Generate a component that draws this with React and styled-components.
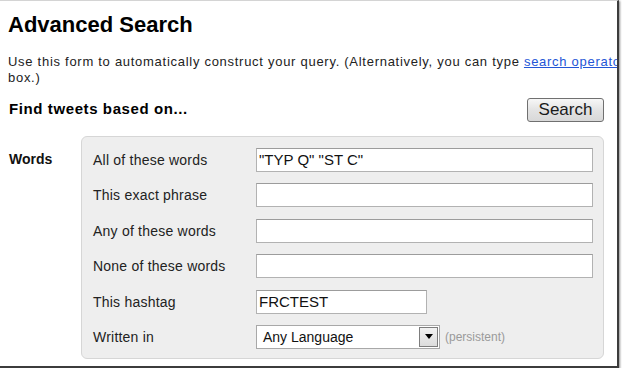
import React from "react";
import styled, { createGlobalStyle } from "styled-components";

const Global = createGlobalStyle`
  html, body { margin: 0; padding: 0; background: #ffffff; }
  body { font-family: "Liberation Sans", Arial, sans-serif; color: #111; }
`;

const Frame = styled.div`
  box-sizing: border-box;
  width: 619px;
  height: 368px;
  border-top: 1px solid #d4d4d4;
  border-right: 2px solid #3c3c3c;
  border-bottom: 2px solid #3c3c3c;
  box-shadow: 1px 1px 2px rgba(0, 0, 0, 0.45);
  overflow: hidden;
  background: #fff;
`;

const Content = styled.div`
  width: 596px;
  padding: 11px 0 0 8px;
`;

const Title = styled.h1`
  margin: 0;
  font-size: 22px;
  line-height: 25px;
  font-weight: bold;
  color: #000;
`;

const Desc = styled.p`
  margin: 17px 0 0;
  font-size: 13px;
  letter-spacing: 0.72px;
  line-height: 16px;
  color: #222;
  white-space: nowrap;
`;

const Link = styled.a`
  color: #2456d6;
  text-decoration: underline;
`;

const HeaderRow = styled.div`
  display: flex;
  justify-content: space-between;
  align-items: center;
  margin-top: 12px;
`;

const Subhead = styled.h3`
  margin: 0 0 3px 1px;
  font-size: 15px;
  letter-spacing: 0.6px;
  line-height: 18px;
  font-weight: bold;
  color: #000;
`;

const SearchButton = styled.button`
  box-sizing: border-box;
  width: 77px;
  height: 24px;
  padding: 0;
  border: 1px solid #707070;
  border-radius: 3px;
  background: linear-gradient(#f7f7f7, #e3e3e3 50%, #d8d8d8);
  font-family: "Liberation Sans", Arial, sans-serif;
  font-size: 17px;
  color: #1a1a1a;
`;

const Section = styled.div`
  display: grid;
  grid-template-columns: 73px 1fr;
  margin-top: 14px;
`;

const SectionLabel = styled.div`
  font-size: 14px;
  font-weight: bold;
  line-height: 16px;
  padding: 15px 0 0 1px;
  color: #111;
`;

const Panel = styled.div`
  box-sizing: border-box;
  background: #eeeeee;
  border: 1px solid #d6d6d6;
  border-radius: 6px;
  padding: 11px 10px 9px 11px;
  display: grid;
  grid-template-columns: 163px 1fr;
  row-gap: 11.4px;
  align-items: center;
`;

const FieldLabel = styled.label`
  font-size: 14px;
  letter-spacing: 0.22px;
  color: #222;
  line-height: 16px;
`;

const TextBox = styled.div`
  box-sizing: border-box;
  height: 24px;
  width: ${(p) => p.$w || "100%"};
  background: #fff;
  border: 1px solid #b2b2b2;
  border-top-color: #9c9c9c;
  padding: 0 2px;
  font-size: 15px;
  line-height: 22px;
  color: #111;
  white-space: nowrap;
  overflow: hidden;
`;

const SelectRow = styled.div`
  display: flex;
  align-items: center;
  gap: 5px;
`;

const SelectBox = styled.div`
  box-sizing: border-box;
  width: 184px;
  height: 24px;
  background: #fff;
  border: 1px solid #a8a8a8;
  display: flex;
  align-items: center;
  justify-content: space-between;
  padding: 0 1px 0 6px;
  font-size: 14px;
  color: #111;
`;

const ArrowBox = styled.div`
  box-sizing: border-box;
  width: 19px;
  height: 20px;
  border: 1px solid #7d7d7d;
  background: linear-gradient(#f2f2f2, #dcdcdc);
  display: flex;
  align-items: center;
  justify-content: center;
`;

const Hint = styled.span`
  font-size: 12px;
  color: #9a9a9a;
`;

const rows = [
  { label: "All of these words", value: '"TYP Q" "ST C"' },
  { label: "This exact phrase", value: "" },
  { label: "Any of these words", value: "" },
  { label: "None of these words", value: "" },
  { label: "This hashtag", value: "FRCTEST", w: "171px" },
];

export default function App() {
  return (
    <>
      <Global />
      <Frame>
        <Content>
          <Title>Advanced Search</Title>
          <Desc>
            Use this form to automatically construct your query. (Alternatively, you can type{" "}
            <Link href="#">search operators</Link> directly into the search
            <br />
            box.)
          </Desc>
          <HeaderRow>
            <Subhead>Find tweets based on...</Subhead>
            <SearchButton>Search</SearchButton>
          </HeaderRow>
          <Section>
            <SectionLabel>Words</SectionLabel>
            <Panel>
              {rows.map((r) => (
                <React.Fragment key={r.label}>
                  <FieldLabel>{r.label}</FieldLabel>
                  <TextBox $w={r.w}>{r.value}</TextBox>
                </React.Fragment>
              ))}
              <FieldLabel>Written in</FieldLabel>
              <SelectRow>
                <SelectBox>
                  <span>Any Language</span>
                  <ArrowBox>
                    <svg width="8" height="5" viewBox="0 0 8 5">
                      <path d="M0 0 H8 L4 5 Z" fill="#000" />
                    </svg>
                  </ArrowBox>
                </SelectBox>
                <Hint>(persistent)</Hint>
              </SelectRow>
            </Panel>
          </Section>
        </Content>
      </Frame>
    </>
  );
}
